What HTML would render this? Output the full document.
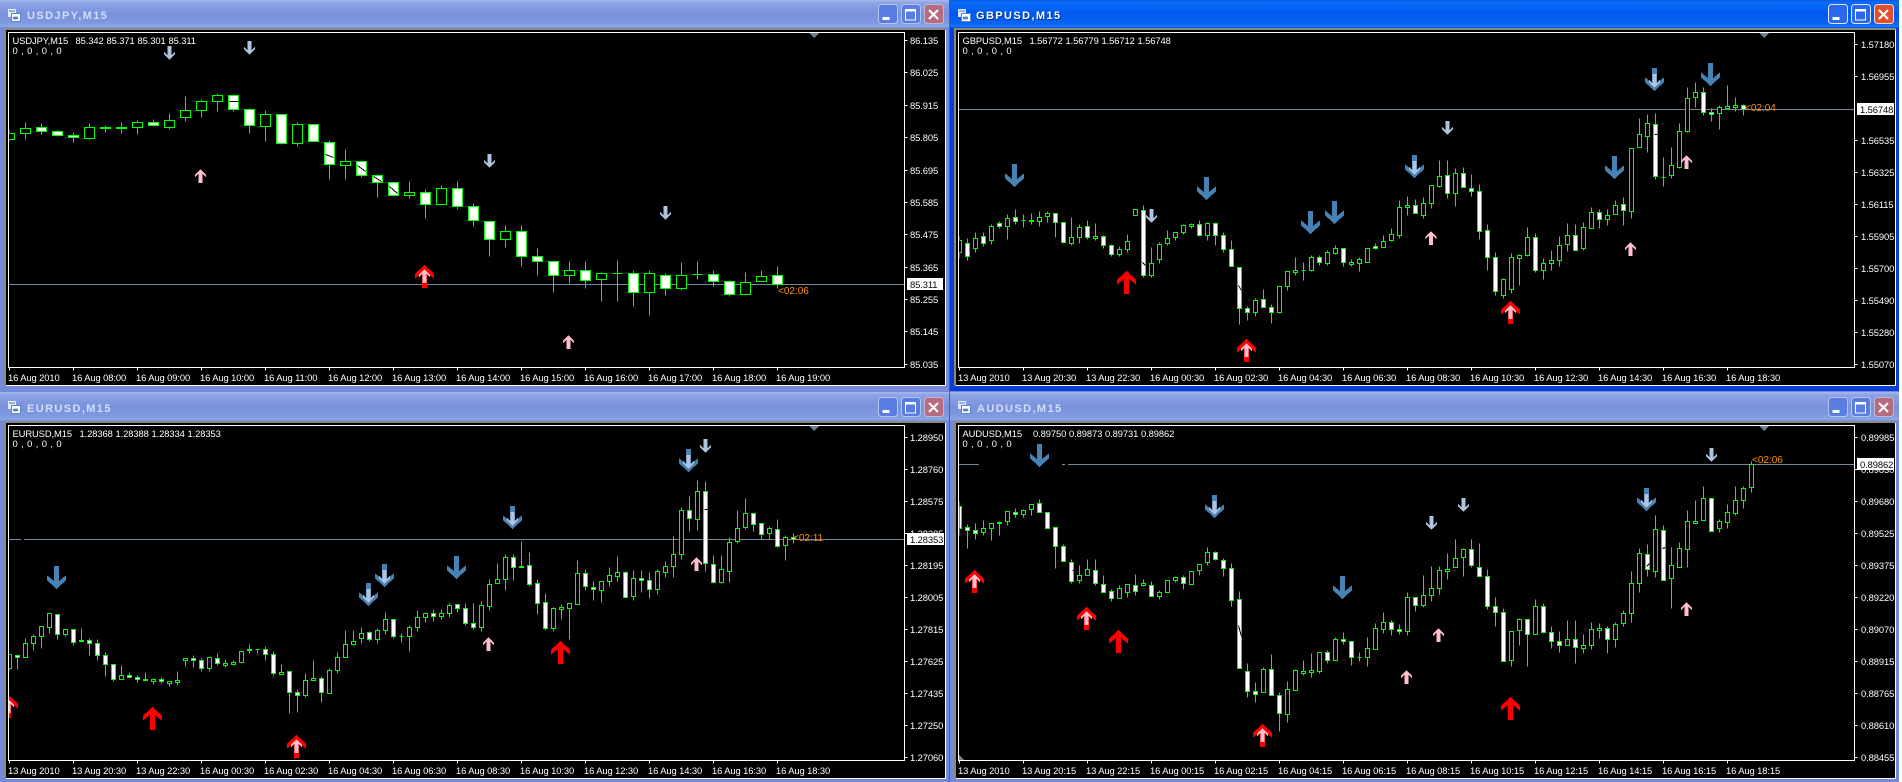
<!DOCTYPE html>
<html><head><meta charset="utf-8"><title>MT4 charts</title>
<style>
html,body{margin:0;padding:0;background:#fff;width:1902px;height:782px;overflow:hidden}
svg{display:block}
text{font-family:"Liberation Sans",sans-serif;font-size:9.4px;fill:#fff;letter-spacing:-.1px}
.t{font-size:11px;font-weight:bold;letter-spacing:1.4px}
.ti{fill:#d3dff8}
.ta{fill:#fff}
.o{fill:#ff8c00;font-size:10px;letter-spacing:0}
.k{fill:#000}
.z{letter-spacing:.4px}
.c{shape-rendering:crispEdges}
.wk{fill:none;stroke:#0f0;stroke-width:1}
.bk{fill:#000;stroke:#0f0;stroke-width:1}
.bw{fill:#fff;stroke:#0f0;stroke-width:1}
.tk{fill:none;stroke:#fff;stroke-width:1}
</style></head><body>
<svg xmlns="http://www.w3.org/2000/svg" width="1902" height="782" viewBox="0 0 1902 782">
<defs>
<linearGradient id="gi" x1="0" y1="0" x2="0" y2="1"><stop offset="0" stop-color="#a6b9ec"/><stop offset=".1" stop-color="#8ea3e5"/><stop offset=".5" stop-color="#7a91dd"/><stop offset=".8" stop-color="#7f98e0"/><stop offset=".93" stop-color="#8aa6ea"/><stop offset="1" stop-color="#7d90d8"/></linearGradient>
<linearGradient id="ga" x1="0" y1="0" x2="0" y2="1"><stop offset="0" stop-color="#0a5ae6"/><stop offset=".1" stop-color="#0a6cf8"/><stop offset=".5" stop-color="#0058ee"/><stop offset=".85" stop-color="#0a64f2"/><stop offset=".95" stop-color="#1a78fa"/><stop offset="1" stop-color="#0042d8"/></linearGradient>
<clipPath id="c1"><rect x="9" y="33" width="895" height="334"/></clipPath>
<clipPath id="c2"><rect x="959" y="33" width="895" height="334"/></clipPath>
<clipPath id="c3"><rect x="9" y="426" width="895" height="334"/></clipPath>
<clipPath id="c4"><rect x="959" y="426" width="895" height="334"/></clipPath>
<path id="D" d="M-2.5 0h5v15l7-5.7v5L0 23l-9.5-8.7v-5l7 5.7z"/>
<path id="d" d="M-2 0h4v9l3.5-3.3v2.6L0 14l-5.5-5.7v-2.6L-2 9z"/>
<path id="U" d="M-2.5 23h5V8l7 5.7v-5L0 0l-9.5 8.7v5l7-5.7z"/>
<path id="u" d="M-2 14h4V5l3.5 3.3V5.7L0 0l-5.5 5.7v2.6L-2 5z"/>
<g id="ic"><rect x="0" y="0" width="8" height="8" fill="#dfe8f8"/><path d="M1 2h6" stroke="#5a7ad8"/><rect x="3.5" y="4.5" width="9" height="8" fill="#fff" stroke="#5a8ac8"/><path d="M5 8l1 2 1-2 1 2 1-2 1 2" fill="none" stroke="#3a6ab8"/></g>
<g id="bi"><rect x=".5" y=".5" width="19" height="19" rx="3" fill="#5a7de2" stroke="#b4c6f0"/><rect x="23.5" y=".5" width="19" height="19" rx="3" fill="#5a7de2" stroke="#b4c6f0"/><rect x="46.5" y=".5" width="19" height="19" rx="3" fill="#b46c80" stroke="#c8b4cc"/><rect x="4.5" y="13" width="7" height="3" fill="#fff"/><rect x="27.5" y="6" width="10" height="10" fill="none" stroke="#fff"/><rect x="27" y="5" width="11" height="2.5" fill="#fff"/><path d="M51 6l9 9M60 6l-9 9" stroke="#fff" stroke-width="2"/></g>
<g id="ba"><rect x=".5" y=".5" width="19" height="19" rx="3" fill="#2a68ee" stroke="#dfe8ff"/><rect x="23.5" y=".5" width="19" height="19" rx="3" fill="#2a68ee" stroke="#dfe8ff"/><rect x="46.5" y=".5" width="19" height="19" rx="3" fill="#e0502c" stroke="#f4d8d0"/><rect x="4.5" y="13" width="7" height="3" fill="#fff"/><rect x="27.5" y="6" width="10" height="10" fill="none" stroke="#fff"/><rect x="27" y="5" width="11" height="2.5" fill="#fff"/><path d="M51 6l9 9M60 6l-9 9" stroke="#fff" stroke-width="2"/></g>
</defs>

<!-- backdrops -->
<rect x="0" y="0" width="1899" height="782" fill="#7488dc"/>
<rect x="949" y="0" width="1" height="782" fill="#4a5ab0"/>

<!-- window 1 -->
<rect x="0" y="0" width="949" height="391" fill="#7488dc"/>
<rect x="0" y="0" width="949" height="28" fill="url(#gi)"/>
<rect x="4" y="28" width="942" height="358" fill="#fff"/><rect x="4" y="28" width="942" height="2" fill="#8a8a80"/><rect x="4" y="28" width="2" height="358" fill="#8a8a80"/><rect x="6" y="30" width="939" height="355" fill="#000"/>
<!-- window 2 -->
<rect x="950" y="0" width="949" height="391" fill="#0a3ed8"/>
<rect x="950" y="0" width="949" height="28" fill="url(#ga)"/>
<rect x="954" y="28" width="942" height="358" fill="#fff"/><rect x="954" y="28" width="942" height="2" fill="#8a8a80"/><rect x="954" y="28" width="2" height="358" fill="#8a8a80"/><rect x="956" y="30" width="939" height="355" fill="#000"/>
<!-- window 3 -->
<rect x="0" y="392" width="949" height="390" fill="#7488dc"/>
<rect x="0" y="392" width="949" height="29" fill="url(#gi)"/>
<rect x="4" y="421" width="942" height="358" fill="#fff"/><rect x="4" y="421" width="942" height="2" fill="#8a8a80"/><rect x="4" y="421" width="2" height="358" fill="#8a8a80"/><rect x="6" y="423" width="939" height="355" fill="#000"/>
<!-- window 4 -->
<rect x="950" y="392" width="949" height="390" fill="#7488dc"/>
<rect x="950" y="392" width="949" height="29" fill="url(#gi)"/>
<rect x="954" y="421" width="942" height="358" fill="#fff"/><rect x="954" y="421" width="942" height="2" fill="#8a8a80"/><rect x="954" y="421" width="2" height="358" fill="#8a8a80"/><rect x="956" y="423" width="939" height="355" fill="#000"/>

<!-- title bars -->
<use href="#ic" x="8" y="9"/><text class="t ti" x="27" y="19">USDJPY,M15</text><use href="#bi" x="878" y="4"/>
<use href="#ic" x="958" y="9"/><text class="t k" x="977" y="20" style="fill:#003090">GBPUSD,M15</text><text class="t ta" x="976" y="19">GBPUSD,M15</text><use href="#ba" x="1828" y="4"/>
<use href="#ic" x="8" y="401"/><text class="t ti" x="27" y="412">EURUSD,M15</text><use href="#bi" x="878" y="397"/>
<use href="#ic" x="958" y="401"/><text class="t ti" x="977" y="412">AUDUSD,M15</text><use href="#bi" x="1828" y="397"/>

<!-- price lines -->
<g class="c" fill="#778899">
<rect x="9" y="284" width="895" height="1"/>
<rect x="959" y="109" width="895" height="1"/>
<rect x="9" y="539" width="12" height="1"/><rect x="24" y="539" width="880" height="1"/>
<rect x="959" y="464" width="20" height="1"/><rect x="1062" y="464" width="3" height="1"/><rect x="1068" y="464" width="786" height="1"/>
</g>

<!-- chart 1 candles -->
<g class="c" clip-path="url(#c1)" transform="translate(.5,.5)">
<path class="wk" d="M9 129V141M25 122V139M41 123V134M57 130V136M73 132V142M89 123V139M105 125V132M121 122V133M137 120V134M153 119V126M169 113V129M185 96V121M201 99V117M217 93V111M233 94V111M249 108V133M265 110V141M281 114V144M297 122V146M313 124V141M329 140V179M345 149V179M361 161V177M377 174V197M393 182V196M409 181V198M425 189V218M441 185V204M457 181V209M473 203V226M489 221V256M505 225V247M521 225V266M537 248V275M553 261V292M569 261V283M585 261V288M601 272V301M617 260V301M633 270V306M649 270V315M665 273V295M681 262V290M697 261V279M713 270V286M729 280V296M745 272V294M761 270V281M777 266V288"/>
<path class="bk" d="M4 133h10V139h-10zM20 128h10V133h-10zM84 127h10V138h-10zM132 122h10V127h-10zM164 120h10V127h-10zM180 110h10V117h-10zM196 101h10V110h-10zM212 95h10V101h-10zM260 114h10V126h-10zM292 124h10V143h-10zM340 161h10V165h-10zM404 192h10V195h-10zM436 188h10V204h-10zM500 231h10V239h-10zM564 270h10V275h-10zM596 273h10V279h-10zM644 273h10V292h-10zM676 275h10V288h-10zM740 282h10V294h-10zM756 276h10V281h-10zM100 127h10V128h-10zM116 127h10V128h-10zM612 273h10M692 274h10"/>
<path class="bw" d="M36 127h10V131h-10zM52 131h10V135h-10zM68 135h10V137h-10zM148 122h10V125h-10zM228 95h10V109h-10zM244 109h10V125h-10zM276 114h10V143h-10zM308 124h10V141h-10zM324 142h10V164h-10zM356 161h10V175h-10zM372 175h10V182h-10zM388 182h10V195h-10zM420 192h10V204h-10zM452 188h10V206h-10zM468 206h10V220h-10zM484 221h10V239h-10zM516 231h10V256h-10zM532 256h10V261h-10zM548 261h10V275h-10zM580 270h10V280h-10zM628 273h10V292h-10zM660 275h10V288h-10zM708 274h10V281h-10zM724 281h10V294h-10zM772 275h10V284h-10z"/>
<path fill="none" stroke="#000" d="M229 101h9M325 154L333 157M357 165L365 171M373 176L381 181M389 186L397 193"/>
</g>

<!-- chart 2 candles -->
<g class="c" clip-path="url(#c2)" transform="translate(.5,.5)">
<path class="wk" d="M959 236V258M967 238V260M975 232V252M983 232V246M991 224V244M999 221V228M1007 214V239M1015 209V224M1023 214V227M1031 213V224M1039 211V226M1047 211V222M1055 213V237M1063 222V243M1071 217V245M1079 224V243M1087 220V239M1095 223V240M1103 235V248M1111 244V256M1119 246V256M1127 234V252M1143 205V277M1151 247V277M1159 242V263M1167 230V245M1175 232V240M1183 224V234M1191 223V228M1199 220V236M1207 222V240M1215 222V245M1223 232V252M1231 240V266M1239 267V324M1247 306V320M1255 298V316M1263 289V307M1271 304V323M1279 286V313M1287 271V290M1295 257V275M1303 262V280M1311 255V271M1319 255V265M1327 250V265M1335 245V254M1343 248V266M1351 259V266M1359 257V271M1367 248V262M1375 243V249M1383 235V247M1391 228V241M1399 200V238M1407 196V215M1415 199V213M1423 197V218M1431 185V208M1439 160V187M1447 160V198M1455 168V206M1463 167V187M1471 174V196M1479 184V239M1487 224V270M1495 252V295M1503 278V298M1511 253V293M1519 254V285M1527 227V256M1535 233V272M1543 258V279M1551 250V270M1559 236V266M1567 223V251M1575 224V250M1583 222V250M1591 207V228M1599 209V228M1607 209V225M1615 200V214M1623 197V225M1631 148V218M1639 118V147M1647 114V152M1655 113V179M1663 157V186M1671 147V178M1679 123V168M1687 87V132M1695 82V107M1703 87V115M1711 108V121M1719 105V129M1727 85V108M1735 97V111M1743 104V115"/>
<path class="bk" d="M957 240h4V252h-4zM973 238h4V248h-4zM989 226h4V240h-4zM1005 218h4V226h-4zM1029 220h4V221h-4zM1037 217h4V221h-4zM1045 213h4V216h-4zM1069 237h4V243h-4zM1077 227h4V237h-4zM1093 236h4V238h-4zM1117 249h4V254h-4zM1125 241h4V249h-4zM1133 209h4V215h-4zM1149 263h4V275h-4zM1157 244h4V259h-4zM1165 238h4V243h-4zM1173 232h4V237h-4zM1181 225h4V232h-4zM1189 224h4V226h-4zM1205 223h4V235h-4zM1253 300h4V312h-4zM1277 286h4V312h-4zM1285 271h4V286h-4zM1293 270h4V272h-4zM1309 257h4V270h-4zM1325 252h4V263h-4zM1333 248h4V253h-4zM1349 262h4V264h-4zM1357 259h4V263h-4zM1365 248h4V262h-4zM1381 241h4V247h-4zM1389 234h4V240h-4zM1397 207h4V235h-4zM1405 205h4V207h-4zM1421 203h4V215h-4zM1429 185h4V203h-4zM1437 176h4V186h-4zM1453 173h4V193h-4zM1501 279h4V295h-4zM1509 257h4V289h-4zM1517 255h4V258h-4zM1525 237h4V255h-4zM1541 263h4V270h-4zM1549 260h4V263h-4zM1557 245h4V260h-4zM1565 235h4V244h-4zM1581 227h4V248h-4zM1589 212h4V228h-4zM1605 215h4V219h-4zM1613 205h4V214h-4zM1629 148h4V211h-4zM1637 134h4V147h-4zM1645 123h4V136h-4zM1669 165h4V175h-4zM1677 131h4V167h-4zM1685 98h4V131h-4zM1693 92h4V97h-4zM1717 107h4V113h-4zM1725 106h4V108h-4zM1733 105h4V107h-4zM1021 220h4M1301 270h4M1661 177h4"/>
<path class="bw" d="M965 243h4V256h-4zM981 236h4V243h-4zM997 223h4V226h-4zM1013 217h4V221h-4zM1053 213h4V222h-4zM1061 222h4V242h-4zM1085 226h4V237h-4zM1101 236h4V245h-4zM1109 245h4V254h-4zM1141 210h4V275h-4zM1197 224h4V235h-4zM1213 223h4V235h-4zM1221 235h4V249h-4zM1229 249h4V266h-4zM1237 267h4V308h-4zM1245 308h4V312h-4zM1261 299h4V307h-4zM1269 307h4V312h-4zM1317 257h4V262h-4zM1341 248h4V262h-4zM1373 246h4V248h-4zM1413 205h4V213h-4zM1445 175h4V193h-4zM1461 173h4V187h-4zM1469 188h4V191h-4zM1477 191h4V231h-4zM1485 230h4V257h-4zM1493 257h4V291h-4zM1533 237h4V270h-4zM1573 235h4V250h-4zM1597 212h4V219h-4zM1621 204h4V210h-4zM1653 124h4V176h-4zM1701 92h4V112h-4zM1709 112h4V114h-4zM1741 105h4V109h-4z"/>
<path fill="none" stroke="#000" d="M1142 262L1145 265M1238 285L1241 290M1654 134H1657"/>
</g>

<!-- chart 3 candles -->
<g class="c" clip-path="url(#c3)" transform="translate(.5,.5)">
<path class="wk" d="M9 654V670M17 655V669M25 638V657M33 634V650M41 626V648M49 613V633M57 614V639M65 629V636M73 629V645M81 628V641M89 638V655M97 639V660M105 652V676M113 664V681M121 665V679M129 672V677M137 675V682M145 672V680M153 678V684M161 677V683M169 681V686M177 671V685M185 658V666M193 655V667M201 658V671M209 656V671M217 653V665M225 659V667M233 660V665M241 651V662M249 644V653M257 649V653M265 646V660M273 651V675M281 664V674M289 671V713M297 689V712M305 673V697M313 660V680M321 676V702M329 668V693M337 652V673M345 630V657M353 630V645M361 627V643M369 631V641M377 628V643M385 612V634M393 619V638M401 633V642M409 625V651M417 610V631M425 612V622M433 609V621M441 609V619M449 603V617M457 604V612M465 603V625M473 603V629M481 601V631M489 579V610M497 563V583M505 554V590M513 554V580M521 541V567M529 552V586M537 579V614M545 593V630M553 607V631M561 604V619M569 603V639M577 560V604M585 569V590M593 581V600M601 581V602M609 567V586M617 556V581M625 571V597M633 570V600M641 570V592M649 572V598M657 569V594M665 561V577M673 536V577M681 507V559M689 496V531M697 480V530M705 481V571M713 555V583M721 555V583M729 537V582M737 510V543M745 498V529M753 513V531M761 523V539M769 526V539M777 519V547M785 535V560M793 533V543"/>
<path class="bk" d="M7 654h4V668h-4zM23 643h4V657h-4zM31 636h4V643h-4zM39 626h4V636h-4zM47 613h4V627h-4zM63 629h4V634h-4zM119 675h4V679h-4zM183 658h4V660h-4zM207 657h4V668h-4zM239 651h4V662h-4zM279 672h4V674h-4zM303 680h4V695h-4zM311 678h4V680h-4zM327 670h4V693h-4zM335 657h4V670h-4zM343 644h4V657h-4zM351 641h4V644h-4zM359 633h4V638h-4zM375 630h4V639h-4zM383 619h4V630h-4zM407 627h4V636h-4zM415 617h4V627h-4zM423 613h4V617h-4zM439 613h4V616h-4zM447 605h4V613h-4zM479 605h4V627h-4zM487 584h4V606h-4zM495 579h4V583h-4zM503 557h4V579h-4zM551 608h4V628h-4zM559 607h4V609h-4zM567 603h4V608h-4zM575 573h4V604h-4zM599 581h4V590h-4zM607 575h4V581h-4zM615 572h4V576h-4zM631 578h4V596h-4zM655 571h4V589h-4zM663 566h4V572h-4zM671 554h4V566h-4zM679 510h4V554h-4zM695 491h4V519h-4zM719 569h4V582h-4zM727 542h4V571h-4zM735 528h4V541h-4zM743 513h4V527h-4zM767 528h4V533h-4zM783 537h4V545h-4zM79 640h4V641h-4zM143 679h4V680h-4zM151 679h4V681h-4zM167 681h4V683h-4zM175 680h4V682h-4zM223 663h4V665h-4zM231 662h4V664h-4zM247 649h4V650h-4zM519 566h4V567h-4zM255 649h4M399 636h4"/>
<path class="bw" d="M15 655h4V657h-4zM55 614h4V634h-4zM71 629h4V642h-4zM87 640h4V643h-4zM95 643h4V655h-4zM103 655h4V664h-4zM111 664h4V679h-4zM127 675h4V677h-4zM135 677h4V679h-4zM159 679h4V681h-4zM191 658h4V660h-4zM199 660h4V668h-4zM215 658h4V663h-4zM263 649h4V654h-4zM271 654h4V673h-4zM287 671h4V692h-4zM295 692h4V695h-4zM319 678h4V692h-4zM367 632h4V639h-4zM391 619h4V636h-4zM431 613h4V616h-4zM455 604h4V608h-4zM463 608h4V623h-4zM471 623h4V627h-4zM511 557h4V567h-4zM527 565h4V584h-4zM535 583h4V603h-4zM543 602h4V628h-4zM583 573h4V586h-4zM591 587h4V589h-4zM623 572h4V597h-4zM639 578h4V580h-4zM647 580h4V589h-4zM687 510h4V518h-4zM703 491h4V563h-4zM711 564h4V582h-4zM751 513h4V524h-4zM759 523h4V534h-4zM775 529h4V546h-4zM791 537h4V539h-4z"/>
<path fill="none" stroke="#000" d="M704 509H707"/>
</g>

<!-- chart 4 candles -->
<g class="c" clip-path="url(#c4)" transform="translate(.5,.5)">
<path class="wk" d="M959 501V535M967 524V548M975 523V539M983 520V535M991 523V540M999 521V535M1007 511V525M1015 508V517M1023 509V517M1031 504V515M1039 499V512M1047 512V528M1055 527V568M1063 544V561M1071 559V583M1079 565V583M1087 559V575M1095 559V585M1103 575V592M1111 589V601M1119 585V598M1127 584V597M1135 574V595M1143 579V586M1151 581V596M1159 590V599M1167 580V592M1175 576V582M1183 575V589M1191 571V584M1199 564V575M1207 547V565M1215 551V560M1223 558V576M1231 563V606M1239 591V668M1247 663V697M1255 682V702M1263 667V692M1271 654V695M1279 692V731M1287 681V722M1295 669V690M1303 660V675M1311 653V677M1319 652V673M1327 650V663M1335 637V660M1343 632V644M1351 641V665M1359 652V661M1367 637V666M1375 623V649M1383 612V633M1391 620V635M1399 624V634M1407 592V635M1415 597V611M1423 575V607M1431 566V601M1439 566V594M1447 553V579M1455 539V567M1463 548V576M1471 539V567M1479 543V576M1487 569V609M1495 597V626M1503 608V661M1511 631V666M1519 618V645M1527 619V666M1535 599V634M1543 603V633M1551 626V648M1559 631V652M1567 620V645M1575 620V663M1583 634V653M1591 622V649M1599 623V638M1607 626V653M1615 622V647M1623 610V626M1631 571V622M1639 548V592M1647 544V576M1655 515V577M1663 525V580M1671 547V608M1679 542V567M1687 510V567M1695 500V523M1703 486V520M1711 498V531M1719 519V532M1727 504V528M1735 486V515M1743 486V508M1751 461V492"/>
<path class="bk" d="M981 528h4V532h-4zM989 523h4V528h-4zM1005 511h4V521h-4zM1021 510h4V514h-4zM1029 504h4V509h-4zM1077 575h4V580h-4zM1085 569h4V575h-4zM1117 588h4V598h-4zM1125 584h4V592h-4zM1157 592h4V596h-4zM1165 580h4V592h-4zM1173 577h4V580h-4zM1189 571h4V584h-4zM1197 564h4V570h-4zM1205 552h4V562h-4zM1261 669h4V692h-4zM1285 689h4V714h-4zM1293 670h4V690h-4zM1301 671h4V673h-4zM1309 670h4V672h-4zM1317 652h4V671h-4zM1333 639h4V660h-4zM1365 648h4V657h-4zM1373 628h4V649h-4zM1381 622h4V629h-4zM1405 597h4V631h-4zM1421 595h4V605h-4zM1429 588h4V595h-4zM1437 570h4V588h-4zM1445 569h4V571h-4zM1453 558h4V567h-4zM1461 549h4V557h-4zM1509 631h4V660h-4zM1517 619h4V630h-4zM1533 606h4V634h-4zM1565 639h4V645h-4zM1581 645h4V648h-4zM1589 629h4V645h-4zM1597 628h4V630h-4zM1613 624h4V639h-4zM1621 613h4V623h-4zM1629 583h4V613h-4zM1637 553h4V583h-4zM1653 529h4V571h-4zM1669 565h4V578h-4zM1677 548h4V567h-4zM1685 521h4V549h-4zM1693 521h4V523h-4zM1701 498h4V520h-4zM1717 521h4V528h-4zM1725 512h4V522h-4zM1733 500h4V513h-4zM1741 488h4V500h-4zM1749 464h4V487h-4zM997 522h4V523h-4zM1141 583h4V585h-4zM1301 671h4M1357 657h4"/>
<path class="bw" d="M957 506h4V528h-4zM965 527h4V530h-4zM973 530h4V533h-4zM1013 512h4V514h-4zM1037 503h4V512h-4zM1045 512h4V528h-4zM1053 527h4V546h-4zM1061 546h4V561h-4zM1069 562h4V581h-4zM1093 570h4V583h-4zM1101 584h4V592h-4zM1109 591h4V598h-4zM1133 585h4V591h-4zM1149 585h4V596h-4zM1181 577h4V583h-4zM1213 552h4V559h-4zM1221 560h4V568h-4zM1229 568h4V600h-4zM1237 599h4V668h-4zM1245 671h4V691h-4zM1253 691h4V694h-4zM1269 669h4V695h-4zM1277 695h4V713h-4zM1325 652h4V660h-4zM1341 639h4V641h-4zM1349 641h4V657h-4zM1389 622h4V629h-4zM1397 629h4V631h-4zM1413 597h4V605h-4zM1469 549h4V565h-4zM1477 567h4V576h-4zM1485 576h4V606h-4zM1493 606h4V612h-4zM1501 612h4V661h-4zM1525 619h4V634h-4zM1541 606h4V632h-4zM1549 632h4V641h-4zM1557 641h4V645h-4zM1573 639h4V647h-4zM1605 628h4V639h-4zM1645 554h4V569h-4zM1661 530h4V580h-4zM1709 498h4V531h-4z"/>
<path fill="none" stroke="#000" d="M1238 625L1241 636M1072 570H1075M1646 566L1649 563M1662 548L1665 547"/>
</g>

<!-- arrows -->
<g class="c" clip-path="url(#c1)">
<g fill="#b0c4de"><use href="#d" x="169.5" y="46"/><use href="#d" x="249.5" y="41"/><use href="#d" x="489.5" y="154"/><use href="#d" x="665.5" y="206"/></g>
<g fill="#f00"><use href="#U" x="424.5" y="265"/></g>
<g fill="#ffc0cb"><use href="#u" x="424.5" y="269"/><use href="#u" x="200.5" y="169"/><use href="#u" x="568.5" y="335"/></g>
</g>
<g class="c" clip-path="url(#c2)">
<g fill="#4682b4"><use href="#D" x="1014.5" y="164"/><use href="#D" x="1206.5" y="177"/><use href="#D" x="1310.5" y="211"/><use href="#D" x="1334.5" y="201"/><use href="#D" x="1414.5" y="155"/><use href="#D" x="1614.5" y="156"/><use href="#D" x="1654.5" y="68"/><use href="#D" x="1710.5" y="63"/></g>
<g fill="#b0c4de"><use href="#d" x="1414.5" y="161"/><use href="#d" x="1151.5" y="209"/><use href="#d" x="1447.5" y="121"/><use href="#d" x="1654.5" y="74"/></g>
<g fill="#f00"><use href="#U" x="1126.5" y="271"/><use href="#U" x="1246.5" y="339"/><use href="#U" x="1510.5" y="301"/></g>
<g fill="#ffc0cb"><use href="#u" x="1246.5" y="343"/><use href="#u" x="1510.5" y="305"/><use href="#u" x="1686.5" y="155"/><use href="#u" x="1630.5" y="242"/><use href="#u" x="1431" y="231"/></g>
</g>
<g class="c" clip-path="url(#c3)">
<g fill="#4682b4"><use href="#D" x="56.5" y="566"/><use href="#D" x="368.5" y="583"/><use href="#D" x="384.5" y="564"/><use href="#D" x="456.5" y="556"/><use href="#D" x="512.5" y="506"/><use href="#D" x="688.5" y="449"/></g>
<g fill="#b0c4de"><use href="#d" x="368.5" y="589"/><use href="#d" x="384.5" y="570"/><use href="#d" x="512.5" y="512"/><use href="#d" x="688.5" y="455"/><use href="#d" x="705.5" y="439"/></g>
<g fill="#f00"><use href="#U" x="152.5" y="707"/><use href="#U" x="296.5" y="735"/><use href="#U" x="8.5" y="695"/><use href="#U" x="560.5" y="641"/></g>
<g fill="#ffc0cb"><use href="#u" x="296.5" y="739"/><use href="#u" x="8.5" y="699"/><use href="#u" x="488.5" y="637"/><use href="#u" x="696.5" y="557"/></g>
</g>
<g class="c" clip-path="url(#c4)">
<g fill="#4682b4"><use href="#D" x="1214.5" y="495"/><use href="#D" x="1342.5" y="576"/><use href="#D" x="1646.5" y="488"/><use href="#D" x="1039.5" y="444"/></g>
<g fill="#b0c4de"><use href="#d" x="1214.5" y="501"/><use href="#d" x="1646.5" y="494"/><use href="#d" x="1463.5" y="498"/><use href="#d" x="1431.5" y="516"/><use href="#d" x="1711.5" y="448"/></g>
<g fill="#f00"><use href="#U" x="974.5" y="570"/><use href="#U" x="1086.5" y="607"/><use href="#U" x="1262.5" y="724"/><use href="#U" x="1118.5" y="630"/><use href="#U" x="1510.5" y="697"/></g>
<g fill="#ffc0cb"><use href="#u" x="974.5" y="574"/><use href="#u" x="1086.5" y="611"/><use href="#u" x="1262.5" y="728"/><use href="#u" x="1438.5" y="628"/><use href="#u" x="1406.5" y="670"/><use href="#u" x="1686.5" y="602"/></g>
</g>

<!-- triangles -->
<g fill="#708090" class="c"><path d="M809 33h10l-5 5zM1759 33h10l-5 5zM809 426h10l-5 5zM1759 426h10l-5 5zM959 755l5 5h-5z"/></g>

<!-- frames & ticks -->
<g class="c" transform="translate(.5,.5)">
<path class="tk" d="M8 32H904V367H8ZM958 32H1854V367H958ZM8 425H904V760H8ZM958 425H1854V760H958Z"/>
<path class="tk" d="M9 367v3M73 367v3M137 367v3M201 367v3M265 367v3M329 367v3M393 367v3M457 367v3M521 367v3M585 367v3M649 367v3M713 367v3M777 367v3
M959 367v3M1023 367v3M1087 367v3M1151 367v3M1215 367v3M1279 367v3M1343 367v3M1407 367v3M1471 367v3M1535 367v3M1599 367v3M1663 367v3M1727 367v3
M9 760v3M73 760v3M137 760v3M201 760v3M265 760v3M329 760v3M393 760v3M457 760v3M521 760v3M585 760v3M649 760v3M713 760v3M777 760v3
M959 760v3M1023 760v3M1087 760v3M1151 760v3M1215 760v3M1279 760v3M1343 760v3M1407 760v3M1471 760v3M1535 760v3M1599 760v3M1663 760v3M1727 760v3
M904 40h3M904 72h3M904 105h3M904 137h3M904 170h3M904 202h3M904 234h3M904 267h3M904 299h3M904 331h3M904 364h3
M1854 44h3M1854 76h3M1854 140h3M1854 172h3M1854 204h3M1854 236h3M1854 268h3M1854 300h3M1854 332h3M1854 364h3
M904 437h3M904 469h3M904 501h3M904 533h3M904 565h3M904 597h3M904 629h3M904 661h3M904 693h3M904 725h3M904 757h3
M1854 437h3M1854 469h3M1854 501h3M1854 533h3M1854 565h3M1854 597h3M1854 629h3M1854 661h3M1854 693h3M1854 725h3M1854 757h3"/>
</g>

<!-- chart headers -->
<text x="12.5" y="44">USDJPY,M15</text><text x="75.5" y="44">85.342</text><text x="106.5" y="44">85.371</text><text x="137.5" y="44">85.301</text><text x="168.5" y="44">85.311</text><text class="z" x="12.5" y="54">0 , 0 , 0 , 0</text>
<text x="962.5" y="44">GBPUSD,M15</text><text x="1029.5" y="44">1.56772</text><text x="1065.5" y="44">1.56779</text><text x="1101.5" y="44">1.56712</text><text x="1137.5" y="44">1.56748</text><text class="z" x="962.5" y="54">0 , 0 , 0 , 0</text>
<text x="12.5" y="437">EURUSD,M15</text><text x="79.5" y="437">1.28368</text><text x="115.5" y="437">1.28388</text><text x="151.5" y="437">1.28334</text><text x="187.5" y="437">1.28353</text><text class="z" x="12.5" y="447">0 , 0 , 0 , 0</text>
<text x="962.5" y="437">AUDUSD,M15</text><text x="1033" y="437">0.89750</text><text x="1069" y="437">0.89873</text><text x="1105" y="437">0.89731</text><text x="1141" y="437">0.89862</text><text class="z" x="962.5" y="447">0 , 0 , 0 , 0</text>

<!-- right axes -->
<g>
<text x="910" y="44">86.135</text><text x="910" y="76">86.025</text><text x="910" y="109">85.915</text><text x="910" y="141">85.805</text><text x="910" y="174">85.695</text><text x="910" y="206">85.585</text><text x="910" y="238">85.475</text><text x="910" y="271">85.365</text><text x="910" y="303">85.255</text><text x="910" y="335">85.145</text><text x="910" y="368">85.035</text>
<text x="1861" y="48">1.57180</text><text x="1861" y="80">1.56955</text><text x="1861" y="144">1.56535</text><text x="1861" y="176">1.56325</text><text x="1861" y="208">1.56115</text><text x="1861" y="240">1.55905</text><text x="1861" y="272">1.55700</text><text x="1861" y="304">1.55490</text><text x="1861" y="336">1.55280</text><text x="1861" y="368">1.55070</text>
<text x="910" y="441">1.28950</text><text x="910" y="473">1.28760</text><text x="910" y="505">1.28575</text><text x="910" y="537">1.28385</text><text x="910" y="569">1.28195</text><text x="910" y="601">1.28005</text><text x="910" y="633">1.27815</text><text x="910" y="665">1.27625</text><text x="910" y="697">1.27435</text><text x="910" y="729">1.27250</text><text x="910" y="761">1.27060</text>
<text x="1861" y="441">0.89985</text><text x="1861" y="473">0.89830</text><text x="1861" y="505">0.89680</text><text x="1861" y="537">0.89525</text><text x="1861" y="569">0.89375</text><text x="1861" y="601">0.89220</text><text x="1861" y="633">0.89070</text><text x="1861" y="665">0.88915</text><text x="1861" y="697">0.88765</text><text x="1861" y="729">0.88610</text><text x="1861" y="761">0.88455</text>
</g>

<!-- price tags -->
<rect x="907" y="278" width="36" height="12" fill="#fff" class="c"/><text class="k" x="910" y="288">85.311</text>
<rect x="1857" y="103" width="37" height="12" fill="#fff" class="c"/><text class="k" x="1860" y="113">1.56748</text>
<rect x="907" y="533" width="37" height="12" fill="#fff" class="c"/><text class="k" x="910" y="543">1.28353</text>
<rect x="1857" y="458" width="37" height="12" fill="#fff" class="c"/><text class="k" x="1860" y="468">0.89862</text>

<!-- countdown -->
<text class="o" x="778" y="294">&lt;02:06</text>
<text class="o" x="1745" y="111">&lt;02:04</text>
<text class="o" x="793" y="541">&lt;02:11</text>
<text class="o" x="1752" y="463">&lt;02:06</text>

<!-- time axes -->
<g>
<text x="8" y="381">16 Aug 2010</text><text x="72" y="381">16 Aug 08:00</text><text x="136" y="381">16 Aug 09:00</text><text x="200" y="381">16 Aug 10:00</text><text x="264" y="381">16 Aug 11:00</text><text x="328" y="381">16 Aug 12:00</text><text x="392" y="381">16 Aug 13:00</text><text x="456" y="381">16 Aug 14:00</text><text x="520" y="381">16 Aug 15:00</text><text x="584" y="381">16 Aug 16:00</text><text x="648" y="381">16 Aug 17:00</text><text x="712" y="381">16 Aug 18:00</text><text x="776" y="381">16 Aug 19:00</text>
<text x="958" y="381">13 Aug 2010</text><text x="1022" y="381">13 Aug 20:30</text><text x="1086" y="381">13 Aug 22:30</text><text x="1150" y="381">16 Aug 00:30</text><text x="1214" y="381">16 Aug 02:30</text><text x="1278" y="381">16 Aug 04:30</text><text x="1342" y="381">16 Aug 06:30</text><text x="1406" y="381">16 Aug 08:30</text><text x="1470" y="381">16 Aug 10:30</text><text x="1534" y="381">16 Aug 12:30</text><text x="1598" y="381">16 Aug 14:30</text><text x="1662" y="381">16 Aug 16:30</text><text x="1726" y="381">16 Aug 18:30</text>
<text x="8" y="774">13 Aug 2010</text><text x="72" y="774">13 Aug 20:30</text><text x="136" y="774">13 Aug 22:30</text><text x="200" y="774">16 Aug 00:30</text><text x="264" y="774">16 Aug 02:30</text><text x="328" y="774">16 Aug 04:30</text><text x="392" y="774">16 Aug 06:30</text><text x="456" y="774">16 Aug 08:30</text><text x="520" y="774">16 Aug 10:30</text><text x="584" y="774">16 Aug 12:30</text><text x="648" y="774">16 Aug 14:30</text><text x="712" y="774">16 Aug 16:30</text><text x="776" y="774">16 Aug 18:30</text>
<text x="958" y="774">13 Aug 2010</text><text x="1022" y="774">13 Aug 20:15</text><text x="1086" y="774">13 Aug 22:15</text><text x="1150" y="774">16 Aug 00:15</text><text x="1214" y="774">16 Aug 02:15</text><text x="1278" y="774">16 Aug 04:15</text><text x="1342" y="774">16 Aug 06:15</text><text x="1406" y="774">16 Aug 08:15</text><text x="1470" y="774">16 Aug 10:15</text><text x="1534" y="774">16 Aug 12:15</text><text x="1598" y="774">16 Aug 14:15</text><text x="1662" y="774">16 Aug 16:15</text><text x="1726" y="774">16 Aug 18:15</text>
</g>
</svg>
</body></html>
